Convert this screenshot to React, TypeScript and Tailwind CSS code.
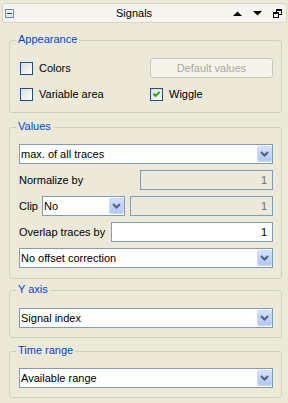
import type { ReactNode } from "react"

function Chevron() {
  return (
    <svg width="9" height="6" viewBox="0 0 9 6">
      <polyline points="1,1 4.5,4.5 8,1" fill="none" stroke="#4d6185" strokeWidth="2" />
    </svg>
  )
}

function Combo({ text, className = "" }: { text: string; className?: string }) {
  return (
    <div className={`flex h-[20px] items-center border border-[#7f9db9] bg-white pl-[1px] ${className}`}>
      <span className="flex-1 truncate">{text}</span>
      <span className="flex h-[16px] w-[15px] items-center justify-center rounded-[2px] border border-[#c9d7fb] bg-linear-to-b from-[#d3dffd] to-[#b4c7f6]">
        <Chevron />
      </span>
    </div>
  )
}

function Field({ value, disabled, className = "" }: { value: string; disabled?: boolean; className?: string }) {
  return (
    <div
      className={`flex h-[20px] items-center justify-end border border-[#7f9db9] pr-[5px] ${
        disabled ? "bg-[#ebe9dc] text-[#6d6d6d]" : "bg-white text-black"
      } ${className}`}
    >
      {value}
    </div>
  )
}

function Check({ label, checked }: { label: string; checked?: boolean }) {
  return (
    <div className="flex h-[20px] items-center">
      <span className="flex h-[13px] w-[13px] items-center justify-center border border-[#1c5180] bg-linear-to-br from-[#dcdcd7] to-white">
        {checked && (
          <svg width="7" height="7" viewBox="0 0 7 7">
            <path d="M0.5 2.8 L2.6 4.9 L6.6 0.9" fill="none" stroke="#21a121" strokeWidth="2" />
          </svg>
        )}
      </span>
      <span className="ml-[6px]">{label}</span>
    </div>
  )
}

function Group({ title, className = "", children }: { title: string; className?: string; children: ReactNode }) {
  return (
    <div className={`relative ml-[9px] mr-[6px] rounded-[3px] border border-[#d0d0bf] pl-[9px] pr-[8px] ${className}`}>
      <span className="absolute -top-[8px] left-[6px] bg-[#ece9d8] px-[2px] text-[#0046d5]">{title}</span>
      {children}
    </div>
  )
}

export default function App() {
  return (
    <div className="h-[403px] w-[288px] overflow-hidden bg-[#ece9d8] font-['Liberation_Sans',Arial,sans-serif] text-[11px] leading-[13px] text-black">
      {/* dock title bar */}
      <div className="ml-[2px] mr-[1px] mt-[3px] flex h-[20px] items-center rounded-[3px] border border-[#d8d5c6] bg-[#f5f4ee]">
        <span className="ml-[2px] flex h-[9px] w-[9px] items-center justify-center border border-[#7088bb] bg-linear-to-b from-white to-[#dde4f2]">
          <span className="h-[1px] w-[5px] bg-[#2a3a5c]" />
        </span>
        <span className="ml-[102px]">Signals</span>
        <div className="flex-1" />
        <svg width="9" height="5" viewBox="0 0 9 5" className="mr-[11px]">
          <polygon points="0,5 4.5,0.5 9,5" fill="#000" />
        </svg>
        <svg width="9" height="5" viewBox="0 0 9 5" className="mr-[11px]">
          <polygon points="0,0 9,0 4.5,4.5" fill="#000" />
        </svg>
        <svg width="9" height="9" viewBox="0 0 9 9" shapeRendering="crispEdges" className="mr-[4px]">
          <path
            d="M3 0h6v2h-6z M8 2h1v4h-1z M6 5h2v1h-2z M3 2h1v1h-1z M0 3h6v2h-6z M0 5h1v4h-1z M5 5h1v4h-1z M1 8h4v1h-4z"
            fill="#000"
          />
        </svg>
      </div>

      <Group title="Appearance" className="mt-[17px] pb-[8px] pt-[17px]">
        <div className="grid grid-cols-[131px_1fr] gap-y-[6px]">
          <div className="pl-[1px]">
            <Check label="Colors" />
          </div>
          <div className="flex h-[20px] items-center justify-center rounded-[3px] border border-[#c9c7ba] bg-[#f5f4ea] text-[#aca899]">
            Default values
          </div>
          <div className="pl-[1px]">
            <Check label="Variable area" />
          </div>
          <Check label="Wiggle" checked />
        </div>
      </Group>

      <Group title="Values" className="mt-[14px] pb-[10px] pt-[16px]">
        <div className="flex flex-col gap-[6px]">
          <Combo text="max. of all traces" />
          <div className="flex items-center">
            <span>Normalize by</span>
            <Field value="1" disabled className="ml-auto w-[133px]" />
          </div>
          <div className="flex items-center">
            <span className="w-[23px]">Clip</span>
            <Combo text="No" className="w-[83px]" />
            <Field value="1" disabled className="ml-[5px] flex-1" />
          </div>
          <div className="flex items-center">
            <span>Overlap traces by</span>
            <Field value="1" className="ml-auto w-[162px]" />
          </div>
          <Combo text="No offset correction" />
        </div>
      </Group>

      <Group title="Y axis" className="mt-[11px] pb-[9px] pt-[17px]">
        <Combo text="Signal index" />
      </Group>

      <Group title="Time range" className="mt-[13px] pb-[9px] pt-[16px]">
        <Combo text="Available range" />
      </Group>
    </div>
  )
}
